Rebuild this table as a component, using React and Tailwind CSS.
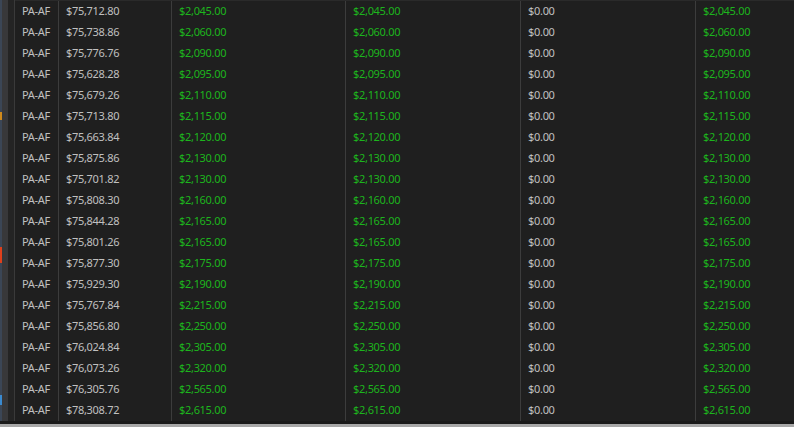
const rows = [
  ["$75,712.80", "$2,045.00"],
  ["$75,738.86", "$2,060.00"],
  ["$75,776.76", "$2,090.00"],
  ["$75,628.28", "$2,095.00"],
  ["$75,679.26", "$2,110.00"],
  ["$75,713.80", "$2,115.00"],
  ["$75,663.84", "$2,120.00"],
  ["$75,875.86", "$2,130.00"],
  ["$75,701.82", "$2,130.00"],
  ["$75,808.30", "$2,160.00"],
  ["$75,844.28", "$2,165.00"],
  ["$75,801.26", "$2,165.00"],
  ["$75,877.30", "$2,175.00"],
  ["$75,929.30", "$2,190.00"],
  ["$75,767.84", "$2,215.00"],
  ["$75,856.80", "$2,250.00"],
  ["$76,024.84", "$2,305.00"],
  ["$76,073.26", "$2,320.00"],
  ["$76,305.76", "$2,565.00"],
  ["$78,308.72", "$2,615.00"],
];

const cell = "h-[21px] flex items-center px-[7px] whitespace-nowrap";

function Gutter() {
  return (
    <div className="flex w-[15px] shrink-0 h-full">
      <div className="w-[2px] flex flex-col bg-[#3b4656]">
        <div className="h-[112px]" />
        <div className="h-[8px] bg-[#d08a1c]" />
        <div className="h-[127px]" />
        <div className="h-[16px] bg-[#e0401c]" />
        <div className="h-[132px]" />
        <div className="h-[10px] bg-[#3a8ad0]" />
      </div>
      <div className="w-[6px] bg-[#38383a]" />
      <div className="w-[7px] bg-[#242424] border-r border-[#3a3a3a]" />
    </div>
  );
}

export default function App() {
  return (
    <div
      className="w-[794px] h-[427px] bg-[#1f1f1f] flex flex-col overflow-hidden text-[11px] tracking-[-0.3px]"
      style={{ fontFamily: '"Noto Sans", "Open Sans", sans-serif' }}
    >
      <div className="flex h-[421px]">
        <Gutter />
        <div className="flex-1 flex flex-col border-t border-[#2a2a2a]">
          {rows.map(([total, amt], i) => (
            <div key={i} className="flex">
              <div className={`${cell} w-[44px] text-[#c0c0c0] border-r border-[#3c3c3c]`}>
                <span className="block w-[30px] overflow-hidden">PA-AF</span>
              </div>
              <div className={`${cell} w-[113px] text-[#c0c0c0] border-r border-[#3c3c3c]`}>{total}</div>
              <div className={`${cell} w-[174px] text-[#1db51d] border-r border-[#3c3c3c]`}>{amt}</div>
              <div className={`${cell} w-[175px] text-[#1db51d] border-r border-[#3c3c3c]`}>{amt}</div>
              <div className={`${cell} w-[175px] text-[#c0c0c0] border-r border-[#3c3c3c]`}>$0.00</div>
              <div className={`${cell} flex-1 text-[#1db51d]`}>{amt}</div>
            </div>
          ))}
        </div>
      </div>
      <div className="h-[3px] bg-[#1a1a1a]" />
      <div className="h-[3px] bg-[#a8a8a8]" />
    </div>
  );
}
